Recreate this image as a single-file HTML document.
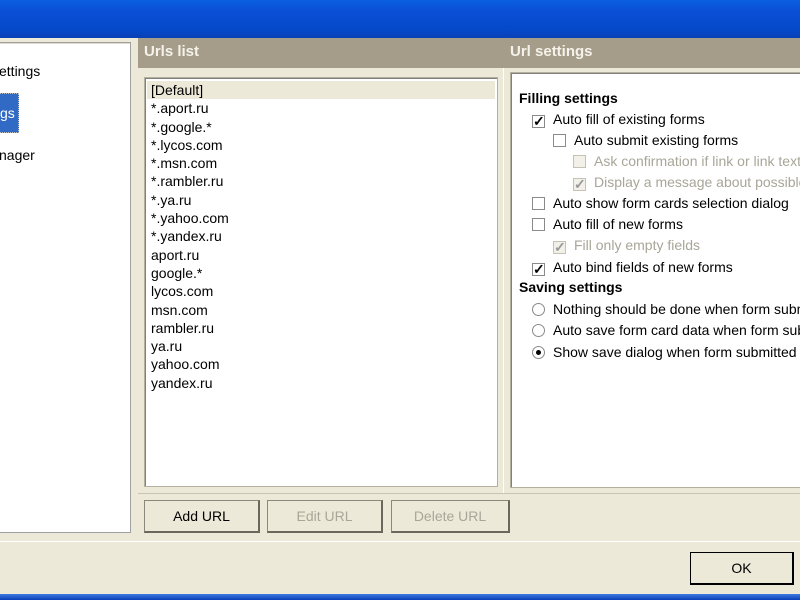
<!DOCTYPE html>
<html><head><style>
*{margin:0;padding:0;box-sizing:border-box}
body{width:800px;height:600px;overflow:hidden;background:#ece9d8;font-family:"Liberation Sans",Arial,sans-serif;font-size:14px;color:#000;position:relative}
.abs{position:absolute}
.title{left:0;top:0;width:800px;height:38px;background:linear-gradient(#0a5fe0,#0a4fd6 30%,#0548c9 80%,#0a3fb5)}
.bot{left:0;top:594px;width:800px;height:6px;background:linear-gradient(#3d7be0,#0a3fb5)}
.left{left:-2px;top:42px;width:133px;height:491px;background:#fff;border:1px solid #a0a0a0;box-shadow:inset 1px 1px 0 #e0ddd0;overflow:hidden}
.hdr{height:30px;background:#a59d89;color:#f4f2ea;font-weight:bold;font-size:15px;padding:5px 0 0 6px}
.box{background:#fff;border:1px solid #b4b09f;box-shadow:inset 1px 1px 0 #808080}
.list div{height:18.3px;line-height:18px;padding-left:6px;font-size:14px}
.btn{height:33px;border:1px solid #8a887c;border-right:2px solid #6a685c;border-bottom:2px solid #6a685c;background:#ece9d8;text-align:center;line-height:30px;font-size:14px}
.dis{color:#a8a698}
.clip{left:510px;top:72px;width:290px;height:416px;overflow:hidden}
.row{position:absolute;height:20px;line-height:20px;font-size:14px;white-space:nowrap}
.cb{display:inline-block;width:13px;height:13px;border:1px solid #8a8a8a;background:#fff;vertical-align:-2px;margin-right:8px;position:relative;font-size:14px;line-height:11px;text-align:center;font-weight:bold}
.rb{display:inline-block;width:13px;height:13px;border:1px solid #8a8a8a;border-radius:50%;background:#fff;vertical-align:-2px;margin-right:8px;position:relative}
.g .cb{border-color:#c5c2b4;background:#f2f0e8;color:#999}
.g{color:#a8a698}
</style></head><body>
<div class="abs title"></div>
<div class="abs left">
 <div class="abs" style="left:0;top:20px;font-size:14px">ettings</div>
 <div class="abs" style="left:0;top:50px;width:20px;height:40px;background:#316ac5;color:#fff;border:1px dotted #c0c0c0;line-height:38px;font-size:14px">gs</div>
 <div class="abs" style="left:0;top:104px;font-size:14px">nager</div>
</div>
<div class="abs hdr" style="left:138px;top:38px;width:366px">Urls list</div>
<div class="abs hdr" style="left:504px;top:38px;width:296px">Url settings</div>
<div class="abs" style="left:503px;top:68px;width:1px;height:425px;background:#fff"></div>
<div class="abs box list" style="left:144px;top:77px;width:354px;height:410px;padding-top:3px">
 <div style="background:#ece9d8;margin:0 2px;padding-left:4px">[Default]</div>
 <div>*.aport.ru</div><div>*.google.*</div><div>*.lycos.com</div><div>*.msn.com</div><div>*.rambler.ru</div><div>*.ya.ru</div><div>*.yahoo.com</div><div>*.yandex.ru</div><div>aport.ru</div><div>google.*</div><div>lycos.com</div><div>msn.com</div><div>rambler.ru</div><div>ya.ru</div><div>yahoo.com</div><div>yandex.ru</div>
</div>
<div class="abs box" style="left:510px;top:72px;width:292px;height:416px"></div>
<div class="abs clip">
<div class="row" style="left:9px;top:16px;font-weight:bold">Filling settings</div>
<div class="row" style="left:22px;top:37px"><span class="cb">✓</span>Auto fill of existing forms</div>
<div class="row" style="left:43px;top:58px"><span class="cb"></span>Auto submit existing forms</div>
<div class="row g" style="left:63px;top:79px"><span class="cb"></span>Ask confirmation if link or link text</div>
<div class="row g" style="left:63px;top:100px"><span class="cb">✓</span>Display a message about possible</div>
<div class="row" style="left:22px;top:121px"><span class="cb"></span>Auto show form cards selection dialog</div>
<div class="row" style="left:22px;top:142px"><span class="cb"></span>Auto fill of new forms</div>
<div class="row g" style="left:43px;top:163px"><span class="cb">✓</span>Fill only empty fields</div>
<div class="row" style="left:22px;top:185px"><span class="cb">✓</span>Auto bind fields of new forms</div>
<div class="row" style="left:9px;top:205px;font-weight:bold">Saving settings</div>
<div class="row" style="left:22px;top:227px"><span class="rb"></span>Nothing should be done when form submitted</div>
<div class="row" style="left:22px;top:248px"><span class="rb"></span>Auto save form card data when form submitted</div>
<div class="row" style="left:22px;top:270px"><span class="rb"><span style="position:absolute;left:3px;top:3px;width:5px;height:5px;border-radius:50%;background:#000"></span></span>Show save dialog when form submitted</div>
</div>
<div class="abs" style="left:138px;top:493px;width:662px;height:1px;background:#c8c4b4"></div>
<div class="abs" style="left:0;top:541px;width:800px;height:1px;background:#fff"></div>
<div class="abs btn" style="left:144px;top:500px;width:116px">Add URL</div>
<div class="abs btn dis" style="left:267px;top:500px;width:116px">Edit URL</div>
<div class="abs btn dis" style="left:391px;top:500px;width:119px">Delete URL</div>
<div class="abs btn" style="left:690px;top:552px;width:104px;border:1px solid #000;border-right:2px solid #000;border-bottom:2px solid #000">OK</div>
<div class="abs bot"></div>
</body></html>
